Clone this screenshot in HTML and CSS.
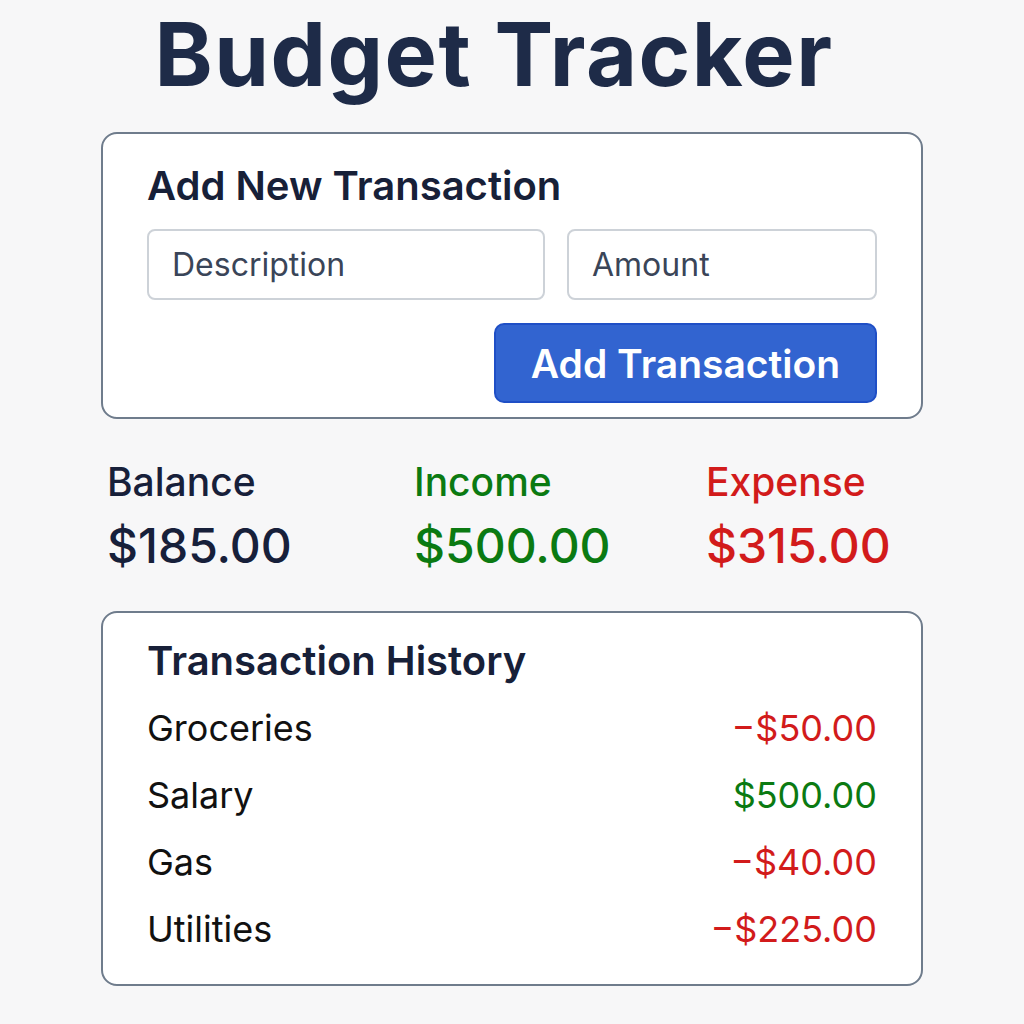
FILE: index.html
```html
<!DOCTYPE html>
<html lang="en">
<head>
<meta charset="utf-8">
<title>Budget Tracker</title>
<link rel="stylesheet" href="styles.css">
</head>
<body>
<main class="app">
  <h1 class="title">Budget Tracker</h1>

  <section class="card add-card">
    <h2 class="card-title">Add New Transaction</h2>
    <div class="fields">
      <input class="field" type="text" placeholder="Description">
      <input class="field" type="text" placeholder="Amount">
    </div>
    <div class="actions">
      <button class="btn" type="button">Add Transaction</button>
    </div>
  </section>

  <section class="stats">
    <div class="stat">
      <div class="stat-label balance">Balance</div>
      <div class="stat-value balance">$185.00</div>
    </div>
    <div class="stat">
      <div class="stat-label income">Income</div>
      <div class="stat-value income">$500.00</div>
    </div>
    <div class="stat">
      <div class="stat-label expense">Expense</div>
      <div class="stat-value expense">$315.00</div>
    </div>
  </section>

  <section class="card history-card">
    <h2 class="card-title">Transaction History</h2>
    <ul class="list">
      <li class="row"><span>Groceries</span><span class="amt expense">−$50.00</span></li>
      <li class="row"><span>Salary</span><span class="amt income">$500.00</span></li>
      <li class="row"><span>Gas</span><span class="amt expense">−$40.00</span></li>
      <li class="row"><span>Utilities</span><span class="amt expense">−$225.00</span></li>
    </ul>
  </section>
</main>
</body>
</html>
```

FILE: styles.css
```css
* { box-sizing: border-box; }

body {
  margin: 0;
  background: #f7f7f8;
  font-family: Inter, "Noto Sans", "Liberation Sans", sans-serif;
  color: #111;
}

.app {
  width: 822px;
  margin: 0 auto;
}

.title {
  margin: 0;
  padding-right: 36px;
  font-size: 88px;
  line-height: 108px;
  font-weight: 700;
  text-align: center;
  color: #1e2b48;
  letter-spacing: 1.5px;
}

.card {
  background: #fff;
  border: 2px solid #6f7c8c;
  border-radius: 16px;
  padding: 0 44px;
}

.add-card {
  margin-top: 24px;
  padding-top: 28px;
  padding-bottom: 14px;
}

.card-title {
  margin: 0;
  font-size: 40px;
  line-height: 48px;
  font-weight: 600;
  color: #172038;
}

.fields {
  display: grid;
  grid-template-columns: 398px 1fr;
  gap: 22px;
  margin-top: 19px;
}

.field {
  width: 100%;
  min-width: 0;
  height: 71px;
  border: 2px solid #cdd2d8;
  border-radius: 8px;
  padding: 0 23px;
  font-family: inherit;
  font-size: 32px;
  color: #3a4558;
  background: #fff;
}

.field::placeholder { color: #3a4558; }

.actions {
  display: flex;
  justify-content: flex-end;
  margin-top: 23px;
}

.btn {
  height: 80px;
  width: 383px;
  border: 2px solid #1f4fc6;
  border-radius: 10px;
  background: #3264d0;
  color: #fff;
  font-family: inherit;
  font-size: 39px;
  font-weight: 600;
  padding: 0;
}

.stats {
  display: grid;
  grid-template-columns: 307px 292px 1fr;
  padding-left: 6px;
  margin-top: 39px;
}

.stat-label {
  font-size: 39px;
  line-height: 48px;
  font-weight: 500;
}

.stat-value {
  margin-top: 12px;
  font-size: 48px;
  line-height: 56px;
  font-weight: 500;
}

.balance { color: #17203a; }
.income { color: #0b7a12; }
.expense { color: #d21b1b; }

.history-card {
  margin-top: 37px;
  padding-top: 24px;
  padding-bottom: 21px;
}

.list {
  list-style: none;
  margin: 10px 0 0;
  padding: 0;
}

.row {
  display: flex;
  justify-content: space-between;
  font-size: 36px;
  line-height: 67px;
  color: #111;
}
```
